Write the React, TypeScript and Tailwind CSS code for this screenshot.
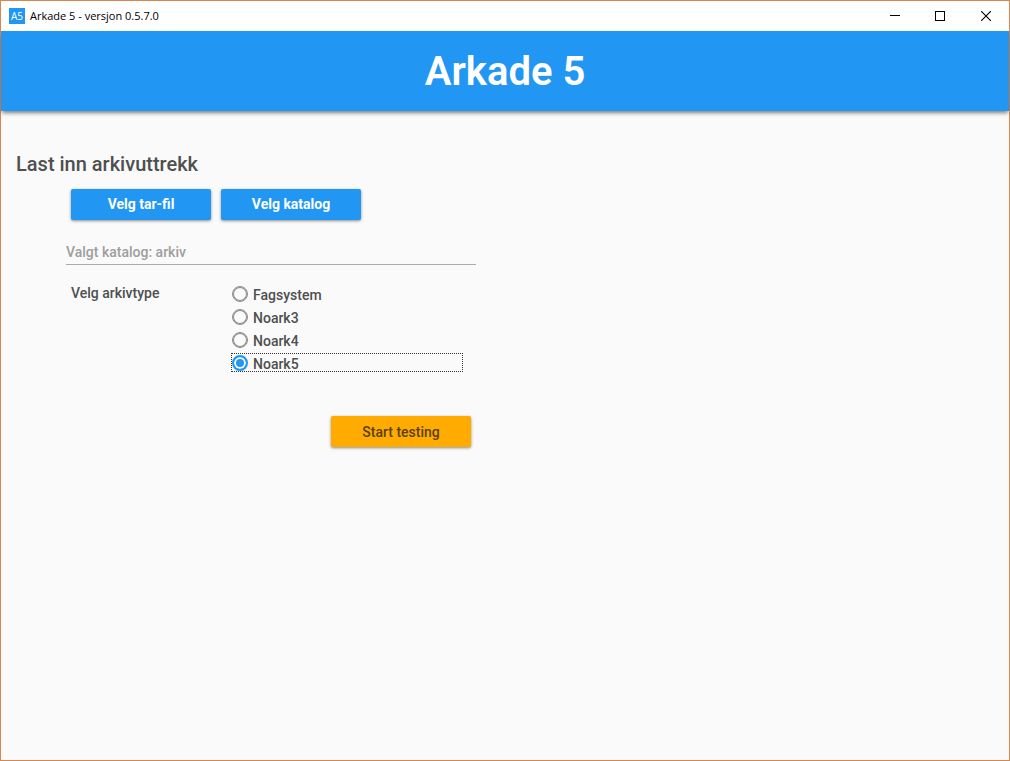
import { useState } from "react";

const archiveTypes = ["Fagsystem", "Noark3", "Noark4", "Noark5"];

const raised = "h-[31px] w-[140px] rounded-xs text-sm shadow-[0_1px_3px_rgba(0,0,0,0.45)]";

function TitleBar() {
  return (
    <div className="flex h-[30px] shrink-0 items-center bg-white pl-2 font-['Open_Sans',sans-serif]">
      <span className="flex size-4 items-center justify-center bg-[#2196f3] text-[10px] leading-4 text-white">
        A5
      </span>
      <span className="ml-[5px] text-[11px] leading-4 text-black">Arkade 5 - versjon 0.5.7.0</span>
      <div className="ml-auto flex h-full text-black">
        <button type="button" aria-label="Minimize" className="flex w-11 items-center justify-center">
          <svg width="10" height="10" viewBox="0 0 10 10" shapeRendering="crispEdges">
            <path d="M0 4h10v1H0z" fill="currentColor" />
          </svg>
        </button>
        <button type="button" aria-label="Maximize" className="flex w-[46px] items-center justify-center pb-px">
          <svg width="10" height="10" viewBox="0 0 10 10" shapeRendering="crispEdges">
            <path d="M.5 .5h9v9h-9z" fill="none" stroke="currentColor" />
          </svg>
        </button>
        <button type="button" aria-label="Close" className="flex w-[46px] items-center justify-center pb-px">
          <svg width="10" height="10" viewBox="0 0 10 10">
            <path d="M0 0l10 10M10 0L0 10" fill="none" stroke="currentColor" strokeWidth="1.1" />
          </svg>
        </button>
      </div>
    </div>
  );
}

export default function App() {
  const [type, setType] = useState("Noark5");

  return (
    <div className="flex min-h-screen flex-col border border-[#d9864f] bg-[#fafafa] font-[Roboto,sans-serif] font-medium text-[#4f4f4f]">
      <TitleBar />
      <header className="flex h-20 shrink-0 items-center justify-center bg-[#2196f3] pt-0.5 shadow-[0_3px_4px_-1px_rgba(0,0,0,0.5)]">
        <h1 className="text-[40px] font-semibold leading-none text-white">Arkade 5</h1>
      </header>
      <main className="px-[15px] pt-[41px]">
        <h2 className="text-xl leading-6">Last inn arkivuttrekk</h2>
        <form className="ml-[50px] mt-[13px] w-[410px] max-w-full" onSubmit={(e) => e.preventDefault()}>
          <div className="flex gap-2.5 px-[5px]">
            <button type="button" className={`${raised} bg-[#2196f3] pb-0.5 font-bold text-white`}>
              Velg tar-fil
            </button>
            <button type="button" className={`${raised} bg-[#2196f3] pb-0.5 font-bold text-white`}>
              Velg katalog
            </button>
          </div>
          <input
            type="text"
            readOnly
            aria-label="Valgt katalog"
            value="Valgt katalog: arkiv"
            className="mt-5 block h-[25px] w-full border-b border-[#aaaaaa] bg-transparent text-sm text-[#9e9e9e] outline-none"
          />
          <div className="mt-[19px] flex pl-[5px]" role="radiogroup" aria-labelledby="type-label">
            <span id="type-label" className="w-40 text-sm leading-[18px]">
              Velg arkivtype
            </span>
            <div className="flex w-[232px] flex-col gap-1">
              {archiveTypes.map((name) => (
                <label
                  key={name}
                  className="flex h-[19px] items-center gap-[5px] border border-dotted border-transparent text-sm leading-4 has-checked:border-[#333333]"
                >
                  <input
                    type="radio"
                    name="archive-type"
                    value={name}
                    checked={type === name}
                    onChange={() => setType(name)}
                    className="size-4 shrink-0 appearance-none rounded-full border border-[#8c8c8c] shadow-[inset_0_0_0_1px_#8c8c8c] outline-none checked:border-2 checked:border-[#2196f3] checked:bg-[#2196f3] checked:shadow-[inset_0_0_0_2px_#fafafa]"
                  />
                  <span className="pt-[3px]">{name}</span>
                </label>
              ))}
            </div>
          </div>
          <div className="mt-11 flex justify-end pr-[5px]">
            <button type="submit" className={`${raised} bg-[#ffab00] text-[#5c3f08]`}>
              Start testing
            </button>
          </div>
        </form>
      </main>
    </div>
  );
}
